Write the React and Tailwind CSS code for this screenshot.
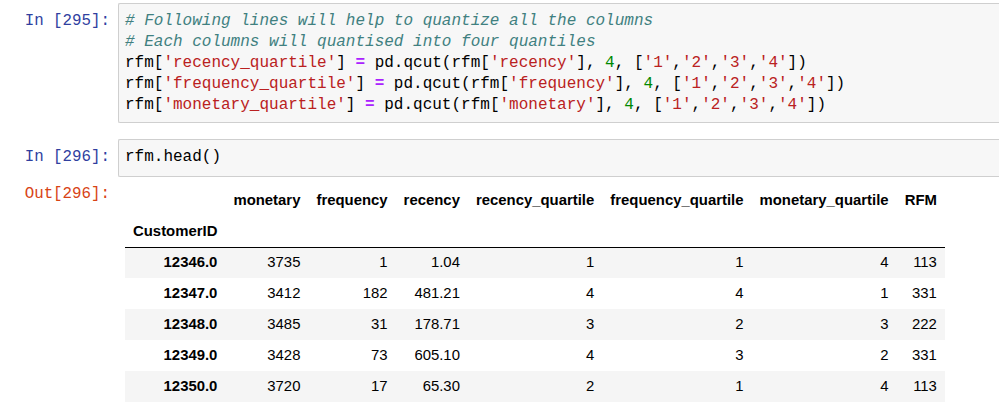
import React from 'react';

const mono = { fontFamily: '"Liberation Mono", "DejaVu Sans Mono", monospace' };

const Str = ({ children }) => <span className="text-[#ba2121]">{children}</span>;
const Num = ({ children }) => <span className="text-[#008800]">{children}</span>;
const Op = ({ children }) => <span className="text-[#aa22ff] font-bold">{children}</span>;
const Comment = ({ children }) => <span className="text-[#408080] italic">{children}</span>;

const Quart = () => (
  <>
    [<Str>'1'</Str>,<Str>'2'</Str>,<Str>'3'</Str>,<Str>'4'</Str>])
  </>
);

const codeLines = [
  <Comment># Following lines will help to quantize all the columns</Comment>,
  <Comment># Each columns will quantised into four quantiles</Comment>,
  <>rfm[<Str>'recency_quartile'</Str>] <Op>=</Op> pd.qcut(rfm[<Str>'recency'</Str>], <Num>4</Num>, <Quart /></>,
  <>rfm[<Str>'frequency_quartile'</Str>] <Op>=</Op> pd.qcut(rfm[<Str>'frequency'</Str>], <Num>4</Num>, <Quart /></>,
  <>rfm[<Str>'monetary_quartile'</Str>] <Op>=</Op> pd.qcut(rfm[<Str>'monetary'</Str>], <Num>4</Num>, <Quart /></>,
];

const columns = ['monetary', 'frequency', 'recency', 'recency_quartile', 'frequency_quartile', 'monetary_quartile', 'RFM'];

const rows = [
  ['12346.0', '3735', '1', '1.04', '1', '1', '4', '113'],
  ['12347.0', '3412', '182', '481.21', '4', '4', '1', '331'],
  ['12348.0', '3485', '31', '178.71', '3', '2', '3', '222'],
  ['12349.0', '3428', '73', '605.10', '4', '3', '2', '331'],
  ['12350.0', '3720', '17', '65.30', '2', '1', '4', '113'],
];

const Prompt = ({ children, out }) => (
  <div
    className={`w-[118px] shrink-0 pr-[8px] text-right text-[15.8px] leading-[21px] ${out ? 'text-[#d84315]' : 'text-[#303f9f]'}`}
    style={mono}
  >
    {children}
  </div>
);

export default function App() {
  return (
    <div className="w-[999px] h-[413px] overflow-hidden bg-white text-black">
      {/* cell 295 */}
      <div className="flex pt-[3px]">
        <div className="pt-[8px]">
          <Prompt>In [295]:</Prompt>
        </div>
        <div
          className="flex-1 bg-[#f7f7f7] border border-r-0 border-[#cfcfcf] rounded-l-[2px] pl-[6px] pt-[7px] pb-[6px] text-[16px] leading-[21px] whitespace-pre"
          style={mono}
        >
          {codeLines.map((l, i) => (
            <div key={i}>{l}</div>
          ))}
        </div>
      </div>

      {/* cell 296 */}
      <div className="flex mt-[16px]">
        <div className="pt-[8px]">
          <Prompt>In [296]:</Prompt>
        </div>
        <div
          className="flex-1 bg-[#f7f7f7] border border-r-0 border-[#cfcfcf] rounded-l-[2px] pl-[6px] pt-[7px] pb-[8px] text-[16px] leading-[21px] whitespace-pre"
          style={mono}
        >
          rfm.head()
        </div>
      </div>

      {/* output */}
      <div className="flex mt-[7px]">
        <div>
          <Prompt out>Out[296]:</Prompt>
        </div>
        <div className="pl-[7px] pt-[1px]">
          <table
            className="border-collapse text-[14.9px] leading-[17px]"
            style={{ fontFamily: '"Liberation Sans", Arial, sans-serif' }}
          >
            <thead className="border-b border-black">
              <tr>
                <th className="px-2 h-[31px]"></th>
                {columns.map((c) => (
                  <th key={c} className="px-2 h-[31px] text-right font-bold whitespace-nowrap">
                    {c}
                  </th>
                ))}
              </tr>
              <tr>
                <th className="px-2 h-[31px] text-left font-bold">CustomerID</th>
                {columns.map((c) => (
                  <th key={c} className="px-2 h-[31px]"></th>
                ))}
              </tr>
            </thead>
            <tbody>
              {rows.map((r, i) => (
                <tr key={r[0]} className={i % 2 === 0 ? 'bg-[#f5f5f5]' : 'bg-white'}>
                  <th className="px-2 h-[31px] text-right font-bold">{r[0]}</th>
                  {r.slice(1).map((v, j) => (
                    <td key={j} className="px-2 h-[31px] text-right">
                      {v}
                    </td>
                  ))}
                </tr>
              ))}
            </tbody>
          </table>
        </div>
      </div>
    </div>
  );
}
